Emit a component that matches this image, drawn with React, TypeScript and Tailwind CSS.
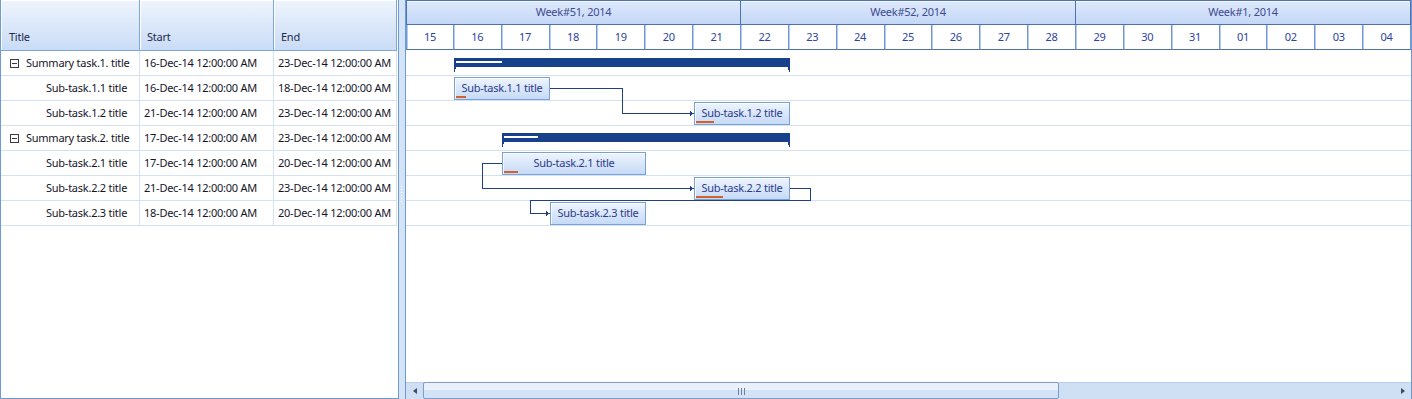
import React from "react";

const px = (d: number) => d * 48;

type Row = { title: string; start: string; end: string; summary?: boolean };
const rows: Row[] = [
  { title: "Summary task.1. title", start: "16-Dec-14 12:00:00 AM", end: "23-Dec-14 12:00:00 AM", summary: true },
  { title: "Sub-task.1.1 title", start: "16-Dec-14 12:00:00 AM", end: "18-Dec-14 12:00:00 AM" },
  { title: "Sub-task.1.2 title", start: "21-Dec-14 12:00:00 AM", end: "23-Dec-14 12:00:00 AM" },
  { title: "Summary task.2. title", start: "17-Dec-14 12:00:00 AM", end: "23-Dec-14 12:00:00 AM", summary: true },
  { title: "Sub-task.2.1 title", start: "17-Dec-14 12:00:00 AM", end: "20-Dec-14 12:00:00 AM" },
  { title: "Sub-task.2.2 title", start: "21-Dec-14 12:00:00 AM", end: "23-Dec-14 12:00:00 AM" },
  { title: "Sub-task.2.3 title", start: "18-Dec-14 12:00:00 AM", end: "20-Dec-14 12:00:00 AM" },
];

const days = ["15", "16", "17", "18", "19", "20", "21", "22", "23", "24", "25", "26", "27", "28", "29", "30", "31", "01", "02", "03", "04"];
const weeks = ["Week#51, 2014", "Week#52, 2014", "Week#1, 2014"];

type Task = { row: number; d0: number; d1: number; title: string; prog: number };
const tasks: Task[] = [
  { row: 1, d0: 1, d1: 3, title: "Sub-task.1.1 title", prog: 10 },
  { row: 2, d0: 6, d1: 8, title: "Sub-task.1.2 title", prog: 18 },
  { row: 4, d0: 2, d1: 5, title: "Sub-task.2.1 title", prog: 14 },
  { row: 5, d0: 6, d1: 8, title: "Sub-task.2.2 title", prog: 27 },
  { row: 6, d0: 3, d1: 5, title: "Sub-task.2.3 title", prog: 0 },
];

function summaryPoly(x0: number, x1: number, y: number) {
  const yb = y + 9;
  const yn = y + 14;
  return `${x0},${y} ${x1},${y} ${x1},${yn} ${x1 - 1},${yn} ${x1 - 2},${yb} ${x0 + 2},${yb} ${x0 + 1},${yn} ${x0},${yn}`;
}

function Arrow({ x, y }: { x: number; y: number }) {
  return <polygon points={`${x - 4},${y - 2} ${x},${y + 0.5} ${x - 4},${y + 3}`} fill="#1f3f87" />;
}

export default function App() {
  return (
    <div className="flex h-[399px] w-[1412px] overflow-hidden bg-white font-['Noto_Sans','Open_Sans',sans-serif] text-[11px] tracking-[-0.25px]">
      {/* Left grid */}
      <div className="flex h-[399px] w-[398px] shrink-0 flex-col border-b border-l border-[#6b9ad6]">
        <div className="flex h-[51px] shrink-0">
          <div className="flex w-[139px] items-end border-b border-r border-[#7ea6db] bg-linear-to-b from-[#eff5fd] to-[#c9dcf6] pb-[5px] pl-[8px] text-[#1e2b4b] shadow-[inset_1px_1px_0_#ffffff]">
            Title
          </div>
          <div className="flex w-[134px] items-end border-b border-r border-[#7ea6db] bg-linear-to-b from-[#eff5fd] to-[#c9dcf6] pb-[5px] pl-[7px] text-[#1e2b4b] shadow-[inset_1px_1px_0_#ffffff]">
            Start
          </div>
          <div className="flex w-[123px] items-end border-b border-r border-[#7ea6db] bg-linear-to-b from-[#eff5fd] to-[#c9dcf6] pb-[5px] pl-[7px] text-[#1e2b4b] shadow-[inset_1px_1px_0_#ffffff]">
            End
          </div>
        </div>
        {rows.map((r, i) => (
          <div key={i} className="flex h-[25px] shrink-0 text-[#15152a]">
            <div className={`flex w-[139px] items-center border-b border-r border-[#d3e1f3] ${r.summary ? "pl-[9px]" : "pl-[45px]"}`}>
              {r.summary && (
                <span className="mr-[7px] flex h-[9px] w-[9px] items-center justify-center border border-[#3c3c3c]">
                  <span className="h-px w-[5px] bg-[#3c3c3c]" />
                </span>
              )}
              <span className="whitespace-nowrap">{r.title}</span>
            </div>
            <div className="flex w-[134px] items-center whitespace-nowrap border-b border-r border-[#d3e1f3] pl-[4px]">{r.start}</div>
            <div className="flex w-[123px] items-center whitespace-nowrap border-b border-r border-[#d3e1f3] pl-[4px]">{r.end}</div>
          </div>
        ))}
      </div>

      {/* Splitter */}
      <div className="relative h-[399px] w-[8px] shrink-0 border-x border-[#6b9ad6] bg-[#d5e3f7]">
        <div className="absolute left-[2px] top-[186px] flex flex-col gap-[2px]">
          {[0, 1, 2, 3, 4, 5].map((k) => (
            <span key={k} className="h-[1px] w-[1px] bg-white" />
          ))}
        </div>
      </div>

      {/* Gantt */}
      <div className="relative flex h-[399px] w-[1006px] shrink-0 flex-col border-r border-[#6b9ad6]">
        <div className="grid h-[25px] shrink-0 grid-cols-[repeat(21,minmax(0,1fr))]">
          {weeks.map((w, i) => (
            <div
              key={w}
              className={`col-span-7 flex items-center justify-center border-y border-r border-[#4f72ab] bg-linear-to-b from-[#dfe9fb] to-[#c3d7f7] text-[#3f4b8f] shadow-[inset_0_1px_0_#f4f8fe] ${i === 0 ? "border-l" : ""}`}
            >
              {w}
            </div>
          ))}
        </div>
        <div className="grid h-[25px] shrink-0 grid-cols-[repeat(21,minmax(0,1fr))]">
          {days.map((d, i) => (
            <div
              key={i}
              className={`flex items-center justify-center border-b border-r border-b-[#4f72ab] border-r-[#7099d3] text-[#2a44a0] shadow-[inset_1px_0_0_#b5cbec] ${i === 0 ? "border-l border-l-[#6b9ad6]" : ""}`}
            >
              {d}
            </div>
          ))}
        </div>
        <div className="flex-1 pt-[1px]">
          {rows.map((_, i) => (
            <div key={i} className="h-[25px] border-b border-[#d3e1f3]" />
          ))}
        </div>
        {/* Scrollbar */}
        <div className="flex h-[17px] shrink-0 items-stretch border-t border-[#b9cfeb] bg-[#cfe0f5]">
          <div className="flex w-[17px] items-center justify-center">
            <span className="h-0 w-0 border-y-[3.5px] border-r-[4px] border-y-transparent border-r-[#3b4a66]" />
          </div>
          <div className="relative -mt-px h-[17px] w-[636px] rounded-[2px] border border-[#7c9dc9] bg-linear-to-b from-[#eaf1fc] from-50% to-[#d3e2f6] to-50%">
            <div className="absolute left-[314px] top-[5px] flex gap-[2px]">
              <span className="h-[7px] w-px bg-[#6c7f9d]" />
              <span className="h-[7px] w-px bg-[#6c7f9d]" />
              <span className="h-[7px] w-px bg-[#6c7f9d]" />
            </div>
          </div>
          <div className="flex-1" />
          <div className="flex w-[17px] items-center justify-center">
            <span className="h-0 w-0 border-y-[3.5px] border-l-[4px] border-y-transparent border-l-[#3b4a66]" />
          </div>
        </div>

        {/* Chart overlay */}
        <div className="pointer-events-none absolute left-0 top-0 h-[381px] w-[1005px]">
          <svg width="1005" height="381" className="absolute left-0 top-0" shapeRendering="crispEdges">
            <polygon points={summaryPoly(px(1), px(8), 58)} fill="#17418a" />
            <rect x={50} y={61} width={46} height={2} fill="#ffffff" />
            <polygon points={summaryPoly(px(2), px(8), 133)} fill="#17418a" />
            <rect x={98} y={136} width={34} height={2} fill="#ffffff" />
            <g fill="none" stroke="#1f3f87" strokeWidth={1}>
              <polyline points="144,88.5 216.5,88.5 216.5,113.5 286,113.5" />
              <polyline points="96,163.5 76.5,163.5 76.5,188.5 286,188.5" />
              <polyline points="384,188.5 404.5,188.5 404.5,200.5 124.5,200.5 124.5,213.5 140,213.5" />
            </g>
            <Arrow x={288} y={113} />
            <Arrow x={288} y={188} />
            <Arrow x={144} y={213} />
          </svg>
          {tasks.map((t) => {
            const left = px(t.d0);
            const width = px(t.d1) - left;
            const top = 51 + t.row * 25 + 1;
            return (
              <div
                key={t.title}
                className="absolute flex h-[23px] items-center justify-center border border-[#7aa1d6] bg-linear-to-b from-[#eef4fd] to-[#c6daf6] text-[#2c3b8c] shadow-[inset_1px_1px_0_rgba(255,255,255,0.8)]"
                style={{ left, top, width }}
              >
                <span className="whitespace-nowrap">{t.title}</span>
                {t.prog > 0 && (
                  <span className="absolute bottom-[1px] left-[1px] h-[2px] bg-[#d6602c]" style={{ width: t.prog }} />
                )}
              </div>
            );
          })}
        </div>
      </div>
    </div>
  );
}
